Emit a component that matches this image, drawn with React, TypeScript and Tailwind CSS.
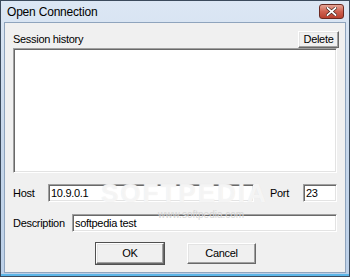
const sunken =
  "border border-t-[#a0a0a0] border-l-[#a0a0a0] border-b-white border-r-white shadow-[inset_1px_1px_0_#696969,inset_-1px_-1px_0_#e3e3e3] bg-white";
const raised =
  "border border-t-white border-l-white border-b-[#696969] border-r-[#696969] shadow-[inset_-1px_-1px_0_#a0a0a0,inset_1px_1px_0_#e3e3e3] bg-[#f0f0f0] flex items-center justify-center text-black";

const Field = ({ value, className }: { value: string; className: string }) => (
  <div className={`${sunken} ${className} flex items-center px-[2px] text-[11px] tracking-[-0.3px] text-black`}>
    {value}
  </div>
);

export default function App() {
  return (
    <div
      className="w-[350px] h-[277px] overflow-hidden border border-[#3b4a5c] bg-gradient-to-b from-[#dce7f4] via-[#c7d7ea] to-[#bcd0e8] flex flex-col relative"
      style={{ fontFamily: '"Liberation Sans", Arial, sans-serif' }}
    >
      {/* title bar */}
      <div className="h-[21px] shrink-0 flex items-center justify-between pl-[6px] pr-[5px]">
        <span className="text-[12px] tracking-[-0.2px] text-black">Open Connection</span>
        <div className="w-[25px] h-[15px] rounded-[3px] border border-[#6b2a22] bg-gradient-to-b from-[#e5a597] via-[#cf6150] to-[#b8402e] flex items-center justify-center">
          <svg width="11" height="9" viewBox="0 0 11 9">
            <path d="M1.5 1 L9.5 8 M9.5 1 L1.5 8" stroke="#3a1a14" strokeWidth="3" strokeLinecap="square" />
            <path d="M1.5 1 L9.5 8 M9.5 1 L1.5 8" stroke="white" strokeWidth="1.8" strokeLinecap="square" />
          </svg>
        </div>
      </div>

      {/* client area */}
      <div className="mx-[3px] mb-[3px] flex-1 border border-[#8fa4bd] bg-[#f0f0f0] pl-[8px] pr-[7px] pt-[8px] text-[11px] tracking-[-0.3px] text-black flex flex-col">
        <div className="h-[17px] flex items-center justify-between">
          <span>Session history</span>
          <button type="button" className={`${raised} w-[41px] h-[17px] text-[11px] mr-[-1px]`}>
            Delete
          </button>
        </div>
        <div className={`${sunken} h-[125px] w-[324px]`} />

        <div className="mt-[11px] h-[18px] flex items-center">
          <span className="w-[35px]">Host</span>
          <Field value="10.9.0.1" className="w-[206px] h-[18px]" />
          <span className="ml-[16px] w-[33px]">Port</span>
          <Field value="23" className="w-[34px] h-[18px]" />
        </div>

        <div className="mt-[12px] h-[18px] flex items-center">
          <span className="w-[59px]">Description</span>
          <Field value="softpedia test" className="w-[265px] h-[18px]" />
        </div>

        <div className="mt-[11px] flex pl-[83px] gap-[23px]">
          <button type="button" className={`${raised} w-[68px] h-[21px] text-[11px] outline outline-1 outline-[#505050]`}>
            OK
          </button>
          <button type="button" className={`${raised} w-[69px] h-[21px] text-[11px]`}>
            Cancel
          </button>
        </div>
      </div>
      <div className="absolute bottom-0 left-0 right-0 h-[2px] bg-[#5cb6e8]" />

      {/* watermark */}
      <div className="pointer-events-none absolute left-[100px] top-[173px] text-[26px] tracking-[2px] text-white/60 font-bold" style={{ textShadow: "0 0 1px #e6e6e6" }}>
        SOFTPEDIA
      </div>
      <div className="pointer-events-none absolute left-[157px] top-[206px] text-[10px] text-[#d6d6d6]">
        www.softpedia.com
      </div>
    </div>
  );
}
